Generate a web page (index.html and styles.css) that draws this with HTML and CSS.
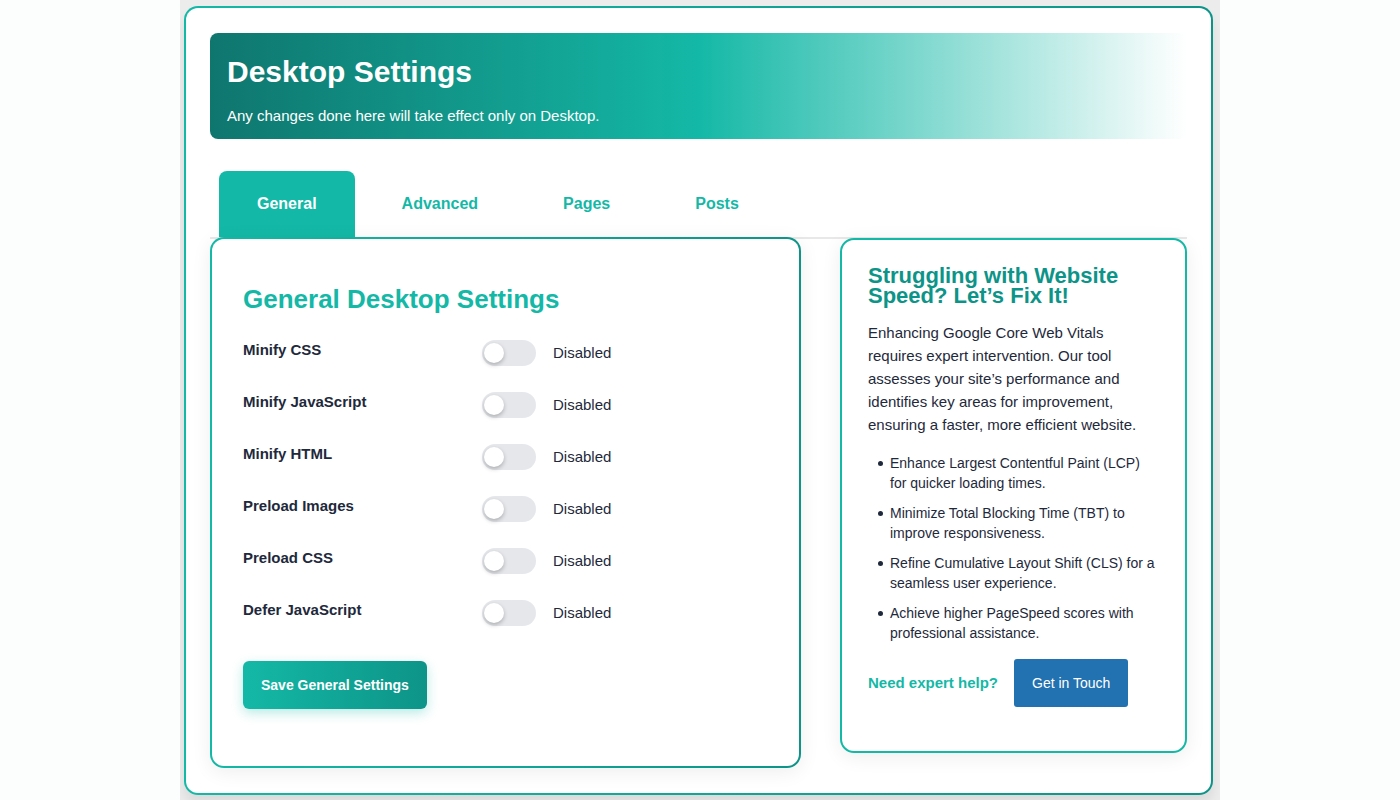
FILE: index.html
```html
<!DOCTYPE html>
<html lang="en">
<head>
  <meta charset="utf-8">
  <meta name="viewport" content="width=device-width, initial-scale=1">
  <title>Desktop Settings</title>
  <link rel="stylesheet" href="styles.css">
</head>
<body>
  <div class="stage">
    <main class="card">
      <header class="banner">
        <h1 class="banner-title">Desktop Settings</h1>
        <p class="banner-text">Any changes done here will take effect only on Desktop.</p>
      </header>

      <nav class="tabs" aria-label="Settings sections">
        <a class="tab tab-active" href="#general" aria-current="page">General</a>
        <a class="tab" href="#advanced">Advanced</a>
        <a class="tab" href="#pages">Pages</a>
        <a class="tab" href="#posts">Posts</a>
      </nav>

      <div class="columns">
        <form class="panel" id="general">
          <h2 class="panel-title">General Desktop Settings</h2>
          <div class="options">
            <div class="option">
              <label class="option-label" for="minify-css">Minify CSS</label>
              <input class="toggle" type="checkbox" role="switch" id="minify-css">
              <span class="option-state">Disabled</span>
            </div>
            <div class="option">
              <label class="option-label" for="minify-js">Minify JavaScript</label>
              <input class="toggle" type="checkbox" role="switch" id="minify-js">
              <span class="option-state">Disabled</span>
            </div>
            <div class="option">
              <label class="option-label" for="minify-html">Minify HTML</label>
              <input class="toggle" type="checkbox" role="switch" id="minify-html">
              <span class="option-state">Disabled</span>
            </div>
            <div class="option">
              <label class="option-label" for="preload-images">Preload Images</label>
              <input class="toggle" type="checkbox" role="switch" id="preload-images">
              <span class="option-state">Disabled</span>
            </div>
            <div class="option">
              <label class="option-label" for="preload-css">Preload CSS</label>
              <input class="toggle" type="checkbox" role="switch" id="preload-css">
              <span class="option-state">Disabled</span>
            </div>
            <div class="option">
              <label class="option-label" for="defer-js">Defer JavaScript</label>
              <input class="toggle" type="checkbox" role="switch" id="defer-js">
              <span class="option-state">Disabled</span>
            </div>
          </div>
          <button class="save" type="button">Save General Settings</button>
        </form>

        <aside class="promo">
          <h2 class="promo-title">Struggling with Website Speed? Let’s Fix It!</h2>
          <p class="promo-text">Enhancing Google Core Web Vitals requires expert intervention. Our tool assesses your site’s performance and identifies key areas for improvement, ensuring a faster, more efficient website.</p>
          <ul class="promo-list">
            <li>Enhance Largest Contentful Paint (LCP) for quicker loading times.</li>
            <li>Minimize Total Blocking Time (TBT) to improve responsiveness.</li>
            <li>Refine Cumulative Layout Shift (CLS) for a seamless user experience.</li>
            <li>Achieve higher PageSpeed scores with professional assistance.</li>
          </ul>
          <div class="promo-action">
            <strong class="promo-question">Need expert help?</strong>
            <a class="contact" href="#contact">Get in Touch</a>
          </div>
        </aside>
      </div>
    </main>
  </div>
</body>
</html>
```
FILE: styles.css
```css
:root {
  --teal: #14b8a6;
  --teal-dark: #0d9488;
  --ink: #1e293b;
}

* {
  box-sizing: border-box;
}

body {
  margin: 0;
  background: #fcfefd;
  color: var(--ink);
  font: 15px/20px "Liberation Sans", Arial, sans-serif;
}

h1, h2, p, ul {
  margin: 0;
}

.stage {
  max-width: 1040px;
  min-height: 100vh;
  margin: 0 auto;
  padding: 6px 7px 5px 4px;
  background: #ececec;
  overflow: hidden;
}

.card {
  padding: 25px 24px;
  border: 2px solid transparent;
  border-radius: 14px;
  background:
    linear-gradient(#fff, #fff) padding-box,
    linear-gradient(90deg, var(--teal), var(--teal-dark)) border-box;
  box-shadow: 0 8px 12px rgba(0, 0, 0, 0.08);
}

.banner {
  padding: 20px 17px 12px;
  border-radius: 8px;
  background: linear-gradient(90deg, #0f766e, var(--teal) 50%, #fff);
  color: #fff;
}

.banner-title {
  font-size: 30px;
  line-height: 38px;
}

.banner-text {
  margin-top: 14px;
  line-height: 22px;
}

.tabs {
  display: flex;
  gap: 9px;
  margin-top: 32px;
  padding-left: 9px;
  border-bottom: 2px solid #e8e8e8;
}

.tab {
  padding: 22px 38px;
  border-radius: 8px 8px 0 0;
  color: var(--teal);
  font-size: 16px;
  font-weight: bold;
  line-height: 22px;
  text-decoration: none;
}

.tab-active {
  background: var(--teal);
  color: #fff;
}

.columns {
  display: grid;
  grid-template-columns: 591fr 347fr;
  gap: 39px;
  align-items: start;
  margin-top: -2px;
}

.panel,
.promo {
  border: 2px solid transparent;
  border-radius: 14px;
  box-shadow: 0 4px 20px rgba(0, 0, 0, 0.07);
}

.panel {
  padding: 44px 31px 57px;
  background:
    linear-gradient(#fff, #fff) padding-box,
    linear-gradient(90deg, var(--teal), var(--teal-dark)) border-box;
}

.panel-title {
  color: var(--teal);
  font-size: 26px;
  line-height: 32px;
}

.options {
  display: grid;
  gap: 26px;
  margin-top: 25px;
}

.option {
  display: grid;
  grid-template-columns: 222px 54px 1fr;
  column-gap: 17px;
  align-items: start;
}

.option-label {
  font-weight: bold;
}

.option-state {
  line-height: 26px;
}

.toggle {
  appearance: none;
  display: flex;
  align-items: center;
  width: 54px;
  height: 26px;
  margin: 0;
  padding: 0 2px;
  border-radius: 13px;
  background: #e5e7eb;
}

.toggle::before {
  content: "";
  width: 20px;
  height: 20px;
  border-radius: 50%;
  background: #fff;
  box-shadow: 0 2px 4px rgba(0, 0, 0, 0.25);
}

.toggle:checked {
  justify-content: flex-end;
  background: var(--teal);
}

.save {
  margin-top: 35px;
  padding: 14px 18px;
  border: 0;
  border-radius: 6px;
  background: linear-gradient(90deg, var(--teal), var(--teal-dark));
  box-shadow: 0 4px 12px rgba(20, 184, 166, 0.3);
  color: #fff;
  font: bold 14px/20px "Liberation Sans", Arial, sans-serif;
}

.promo {
  margin-top: 1px;
  padding: 26px 26px 44px;
  border-color: var(--teal);
  background: #fff;
}

.promo-title {
  color: var(--teal-dark);
  font-size: 22px;
  line-height: 20px;
}

.promo-text {
  margin-top: 15px;
  line-height: 23px;
}

.promo-list {
  display: grid;
  gap: 10px;
  margin-top: 17px;
  padding-left: 22px;
  font-size: 14px;
  list-style: none;
}

.promo-list li::before {
  content: "";
  float: left;
  width: 5px;
  height: 5px;
  margin: 8px 0 0 -12px;
  border-radius: 50%;
  background: var(--ink);
}

.promo-action {
  display: flex;
  align-items: center;
  gap: 16px;
  margin-top: 16px;
}

.promo-question {
  color: var(--teal);
}

.contact {
  padding: 14px 18px;
  border-radius: 3px;
  background: #2271b1;
  color: #fff;
  font-size: 14px;
  text-decoration: none;
}
```
